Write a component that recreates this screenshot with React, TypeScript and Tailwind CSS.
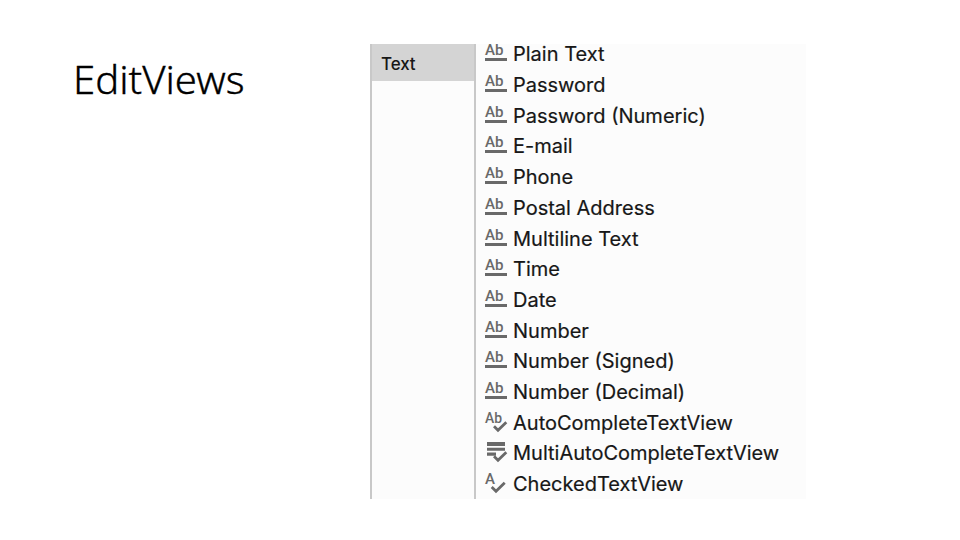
import React from 'react';

type IconKind = 'field' | 'auto' | 'multi' | 'checked';

interface WidgetItem {
    label: string;
    icon: IconKind;
}

const categories = ['Text'];

const widgets: WidgetItem[] = [
    { label: 'Plain Text', icon: 'field' },
    { label: 'Password', icon: 'field' },
    { label: 'Password (Numeric)', icon: 'field' },
    { label: 'E-mail', icon: 'field' },
    { label: 'Phone', icon: 'field' },
    { label: 'Postal Address', icon: 'field' },
    { label: 'Multiline Text', icon: 'field' },
    { label: 'Time', icon: 'field' },
    { label: 'Date', icon: 'field' },
    { label: 'Number', icon: 'field' },
    { label: 'Number (Signed)', icon: 'field' },
    { label: 'Number (Decimal)', icon: 'field' },
    { label: 'AutoCompleteTextView', icon: 'auto' },
    { label: 'MultiAutoCompleteTextView', icon: 'multi' },
    { label: 'CheckedTextView', icon: 'checked' },
];

const WidgetIcon: React.FC<{ kind: IconKind }> = ({ kind }) => (
    <svg width="24" height="24" viewBox="0 0 24 24" fill="#696969" className="shrink-0 overflow-visible font-['Roboto',sans-serif]">
        {kind === 'field' && (
            <>
                <text x="0" y="13.2" fontSize="15.5" fontWeight="500" textLength="18.5" lengthAdjust="spacingAndGlyphs">Ab</text>
                <rect x="0" y="16" width="22" height="3" />
            </>
        )}
        {kind === 'auto' && <text x="0" y="11.5" fontSize="15" fontWeight="500" textLength="17" lengthAdjust="spacingAndGlyphs">Ab</text>}
        {kind === 'checked' && <text x="0" y="11.5" fontSize="15" fontWeight="500">A</text>}
        {kind === 'multi' && <path d="M2 1h18v4H2zM2 6.8h18v3H2zM2 11.6h9v3.2H2z" />}
        {kind !== 'field' && (
            <path
                d={kind === 'checked' ? 'M6.7 15l4.3 4.2 8.7-8.4' : 'M9 15.2l4 4 8.3-8'}
                fill="none"
                stroke="#696969"
                strokeWidth="2.8"
            />
        )}
    </svg>
);

export default function App() {
    return (
        <div className="flex h-[540px] w-[960px] overflow-hidden bg-white">
            <div className="w-[370px] shrink-0 pl-[73px] pt-[51px]">
                <h1 className="whitespace-nowrap font-['Noto_Sans',sans-serif] text-[38px] font-light leading-[56px] text-black [-webkit-text-stroke:0.35px_black]">
                    <span className="inline-block origin-left scale-x-[1.055]">EditViews</span>
                </h1>
            </div>
            <div className="mt-11 flex h-[455px] w-[436px] overflow-hidden bg-[#fcfcfc] font-['Inter',sans-serif] text-[#171717]">
                <div className="w-[106px] shrink-0 border-x-2 border-[#c8c8c8]">
                    {categories.map(c => (
                        <div key={c} className="flex h-[37px] items-center bg-[#d4d4d4] pl-[9px] pt-[4px] text-[17px] font-medium tracking-[-0.1px]">
                            {c}
                        </div>
                    ))}
                </div>
                <ul className="-mt-[5px]">
                    {widgets.map(w => (
                        <li key={w.label} className="flex h-[30.71px] items-center gap-1 pl-[9px]">
                            <WidgetIcon kind={w.icon} />
                            <span className="whitespace-nowrap text-[20px] leading-[28px] [-webkit-text-stroke:0.2px_#171717]">{w.label}</span>
                        </li>
                    ))}
                </ul>
            </div>
        </div>
    );
}
